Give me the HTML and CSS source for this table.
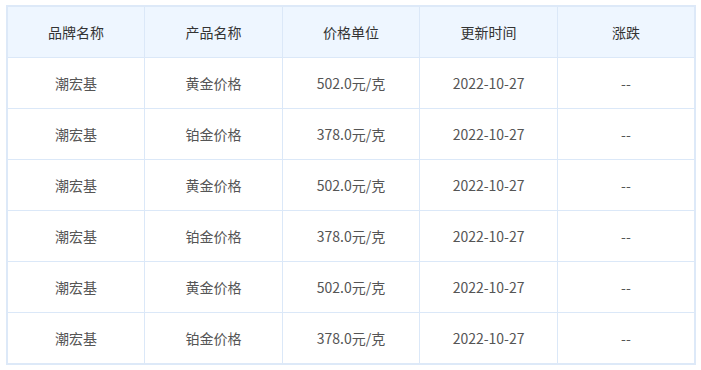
FILE: index.html
```html
<!DOCTYPE html>
<html lang="zh">
<head>
<meta charset="utf-8">
<link rel="stylesheet" href="styles.css">
</head>
<body>
<table class="price-table">
  <thead>
    <tr><th>品牌名称</th><th>产品名称</th><th>价格单位</th><th>更新时间</th><th>涨跌</th></tr>
  </thead>
  <tbody>
    <tr><td>潮宏基</td><td>黄金价格</td><td>502.0元/克</td><td>2022-10-27</td><td>--</td></tr>
    <tr><td>潮宏基</td><td>铂金价格</td><td>378.0元/克</td><td>2022-10-27</td><td>--</td></tr>
    <tr><td>潮宏基</td><td>黄金价格</td><td>502.0元/克</td><td>2022-10-27</td><td>--</td></tr>
    <tr><td>潮宏基</td><td>铂金价格</td><td>378.0元/克</td><td>2022-10-27</td><td>--</td></tr>
    <tr><td>潮宏基</td><td>黄金价格</td><td>502.0元/克</td><td>2022-10-27</td><td>--</td></tr>
    <tr><td>潮宏基</td><td>铂金价格</td><td>378.0元/克</td><td>2022-10-27</td><td>--</td></tr>
  </tbody>
</table>
</body>
</html>
```
FILE: styles.css
```css
html, body {
  margin: 0;
  padding: 0;
  background: #fff;
}
body {
  padding: 5px 0 0 6px;
  font-family: "Noto Sans CJK SC", "Noto Sans", sans-serif;
  font-size: 14px;
}
.price-table {
  width: 690px;
  border-collapse: collapse;
  border: 2px solid #dde9f8;
  table-layout: fixed;
}
.price-table th,
.price-table td {
  border: 1px solid #dbe8f8;
  height: 50px;
  padding: 0;
  text-align: center;
  vertical-align: middle;
  font-weight: normal;
  line-height: 20px;
}
.price-table th {
  background: #eef6ff;
  color: #333;
}
.price-table td {
  color: #555;
}
```
